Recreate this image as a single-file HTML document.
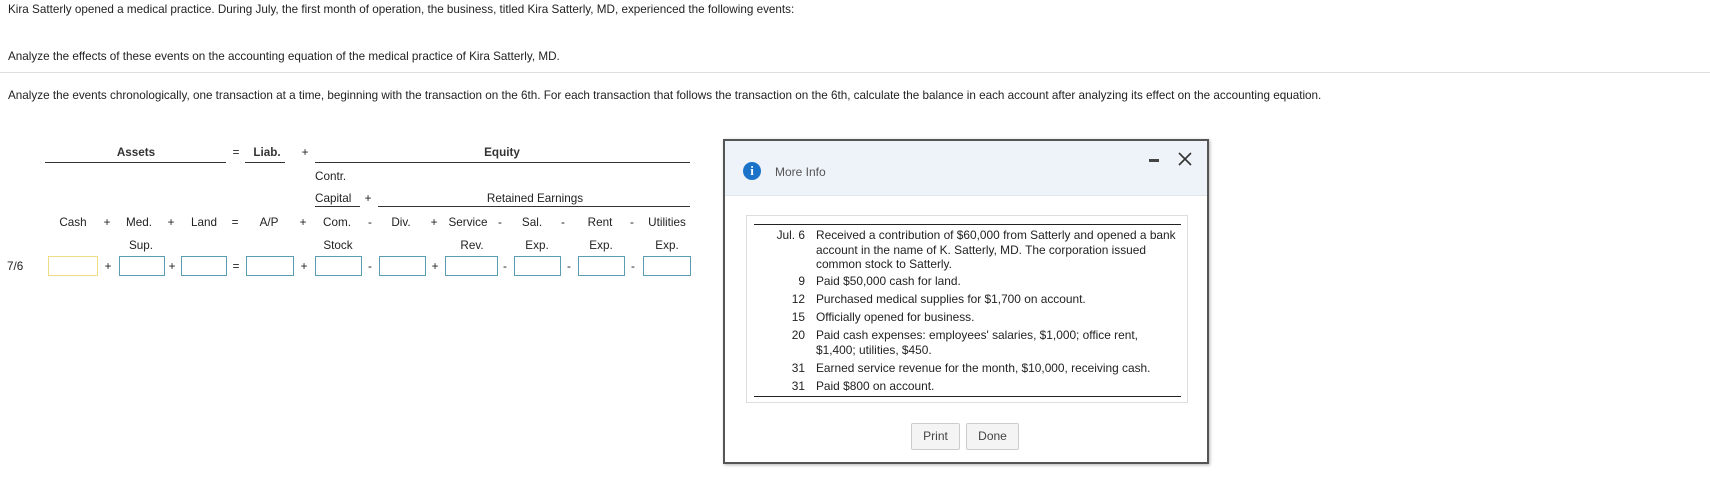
<!DOCTYPE html>
<html><head><meta charset="utf-8"><style>
body{margin:0;width:1710px;height:492px;background:#fff;font-family:"Liberation Sans",Arial,sans-serif;font-size:11.7px;color:#222;position:relative;overflow:hidden}
.a{position:absolute;white-space:nowrap}
.c{position:absolute;white-space:nowrap;transform:translateX(-50%)}
.ln{position:absolute;height:1px;background:#333}
.in{position:absolute;top:256px;height:18px;border:1px solid #5a9cb0;background:#fff}
.m{position:absolute;left:723px;top:139px;width:482px;height:321px;border:2px solid #555;background:#fff;box-shadow:1px 1px 3px rgba(0,0,0,.3)}
.btn{position:absolute;top:282px;height:25px;border:1px solid #ccc;border-radius:2px;background:#f4f4f4;font-size:12px;color:#444;text-align:center;line-height:25px}
.r{position:absolute;font-size:11.9px;color:#222}
.r b{position:absolute;font-weight:normal;text-align:right;width:80px}
</style></head><body>
<div class="a" style="left:8px;top:3px">Kira Satterly opened a medical practice. During July, the first month of operation, the business, titled Kira Satterly, MD, experienced the following events:</div>
<div class="a" style="left:8px;top:50px">Analyze the effects of these events on the accounting equation of the medical practice of Kira Satterly, MD.</div>
<div style="position:absolute;left:0;top:72px;width:1710px;height:1px;background:#ddd"></div>
<div class="a" style="left:8px;top:89px">Analyze the events chronologically, one transaction at a time, beginning with the transaction on the 6th. For each transaction that follows the transaction on the 6th, calculate the balance in each account after analyzing its effect on the accounting equation.</div>

<div class="c" style="left:136px;top:146px;font-weight:bold;color:#333">Assets</div>
<div class="ln" style="left:45px;top:162px;width:181px"></div>
<div class="c" style="left:236px;top:146px">=</div>
<div class="c" style="left:267px;top:146px;font-weight:bold;color:#333">Liab.</div>
<div class="ln" style="left:245px;top:162px;width:40px"></div>
<div class="c" style="left:305px;top:146px">+</div>
<div class="c" style="left:502px;top:146px;font-weight:bold;color:#333">Equity</div>
<div class="ln" style="left:315px;top:162px;width:375px"></div>
<div class="a" style="left:315px;top:170px">Contr.</div>
<div class="a" style="left:315px;top:192px">Capital</div>
<div class="ln" style="left:315px;top:206px;width:45px"></div>
<div class="c" style="left:368px;top:192px">+</div>
<div class="c" style="left:535px;top:192px">Retained Earnings</div>
<div class="ln" style="left:378px;top:206px;width:312px"></div>

<div class="c" style="left:73px;top:216px">Cash</div><div class="c" style="left:107px;top:216px">+</div>
<div class="c" style="left:139px;top:216px">Med.</div><div class="c" style="left:171px;top:216px">+</div>
<div class="c" style="left:204px;top:216px">Land</div><div class="c" style="left:235px;top:216px">=</div>
<div class="c" style="left:269px;top:216px">A/P</div><div class="c" style="left:303px;top:216px">+</div>
<div class="c" style="left:337px;top:216px">Com.</div><div class="c" style="left:370px;top:216px">-</div>
<div class="c" style="left:401px;top:216px">Div.</div><div class="c" style="left:434px;top:216px">+</div>
<div class="c" style="left:468px;top:216px">Service</div><div class="c" style="left:500px;top:216px">-</div>
<div class="c" style="left:532px;top:216px">Sal.</div><div class="c" style="left:563px;top:216px">-</div>
<div class="c" style="left:600px;top:216px">Rent</div><div class="c" style="left:632px;top:216px">-</div>
<div class="c" style="left:667px;top:216px">Utilities</div>
<div class="c" style="left:141px;top:239px">Sup.</div>
<div class="c" style="left:338px;top:239px">Stock</div>
<div class="c" style="left:472px;top:239px">Rev.</div>
<div class="c" style="left:537px;top:239px">Exp.</div>
<div class="c" style="left:601px;top:239px">Exp.</div>
<div class="c" style="left:667px;top:239px">Exp.</div>

<div class="a" style="left:7px;top:260px">7/6</div>
<div class="in" style="left:48px;width:48px;border-color:#f0dc82"></div><div class="c" style="left:108px;top:260px">+</div>
<div class="in" style="left:119px;width:44px"></div><div class="c" style="left:172px;top:260px">+</div>
<div class="in" style="left:181px;width:44px"></div><div class="c" style="left:236px;top:260px">=</div>
<div class="in" style="left:246px;width:46px"></div><div class="c" style="left:304px;top:260px">+</div>
<div class="in" style="left:315px;width:45px"></div><div class="c" style="left:370px;top:260px">-</div>
<div class="in" style="left:379px;width:45px"></div><div class="c" style="left:435px;top:260px">+</div>
<div class="in" style="left:445px;width:51px"></div><div class="c" style="left:505px;top:260px">-</div>
<div class="in" style="left:514px;width:45px"></div><div class="c" style="left:569px;top:260px">-</div>
<div class="in" style="left:578px;width:45px"></div><div class="c" style="left:633px;top:260px">-</div>
<div class="in" style="left:643px;width:46px"></div>

<div class="m">
 <div style="position:absolute;left:0;top:0;width:482px;height:54px;background:#eef3fa;border-bottom:1px solid #e0e6ee"></div>
 <div style="position:absolute;left:18px;top:21px;width:18px;height:18px;border-radius:50%;background:#1a73c8;color:#fff;font-weight:bold;font-size:13px;text-align:center;line-height:18px;font-family:'Liberation Serif',serif">i</div>
 <div class="a" style="left:50px;top:24px;font-size:12px;color:#555">More Info</div>
 <div style="position:absolute;left:424px;top:18px;width:10px;height:3px;background:#444"></div>
 <svg style="position:absolute;left:453px;top:11px" width="14" height="14"><path d="M1 1L13 13M13 1L1 13" stroke="#333" stroke-width="1.6"/></svg>
 <div style="position:absolute;left:21px;top:74px;width:440px;height:186px;border:1px solid #ddd"></div>
 <div class="ln" style="left:29px;top:83px;width:427px;background:#222"></div>
 <div class="ln" style="left:29px;top:255px;width:427px;background:#222"></div>
 <div class="r" style="left:0;top:87px">
  <b style="left:0">Jul. 6</b><div class="a" style="left:91px;top:0;line-height:14.5px">Received a contribution of $60,000 from Satterly and opened a bank<br>account in the name of K. Satterly, MD. The corporation issued<br>common stock to Satterly.</div>
  <b style="left:0;top:46px">9</b><div class="a" style="left:91px;top:46px">Paid $50,000 cash for land.</div>
  <b style="left:0;top:64px">12</b><div class="a" style="left:91px;top:64px">Purchased medical supplies for $1,700 on account.</div>
  <b style="left:0;top:82px">15</b><div class="a" style="left:91px;top:82px">Officially opened for business.</div>
  <b style="left:0;top:100px">20</b><div class="a" style="left:91px;top:100px;line-height:14.5px">Paid cash expenses: employees' salaries, $1,000; office rent,<br>$1,400; utilities, $450.</div>
  <b style="left:0;top:133px">31</b><div class="a" style="left:91px;top:133px">Earned service revenue for the month, $10,000, receiving cash.</div>
  <b style="left:0;top:151px">31</b><div class="a" style="left:91px;top:151px">Paid $800 on account.</div>
 </div>
 <div class="btn" style="left:186px;width:47px">Print</div>
 <div class="btn" style="left:241px;width:51px">Done</div>
</div>
</body></html>
